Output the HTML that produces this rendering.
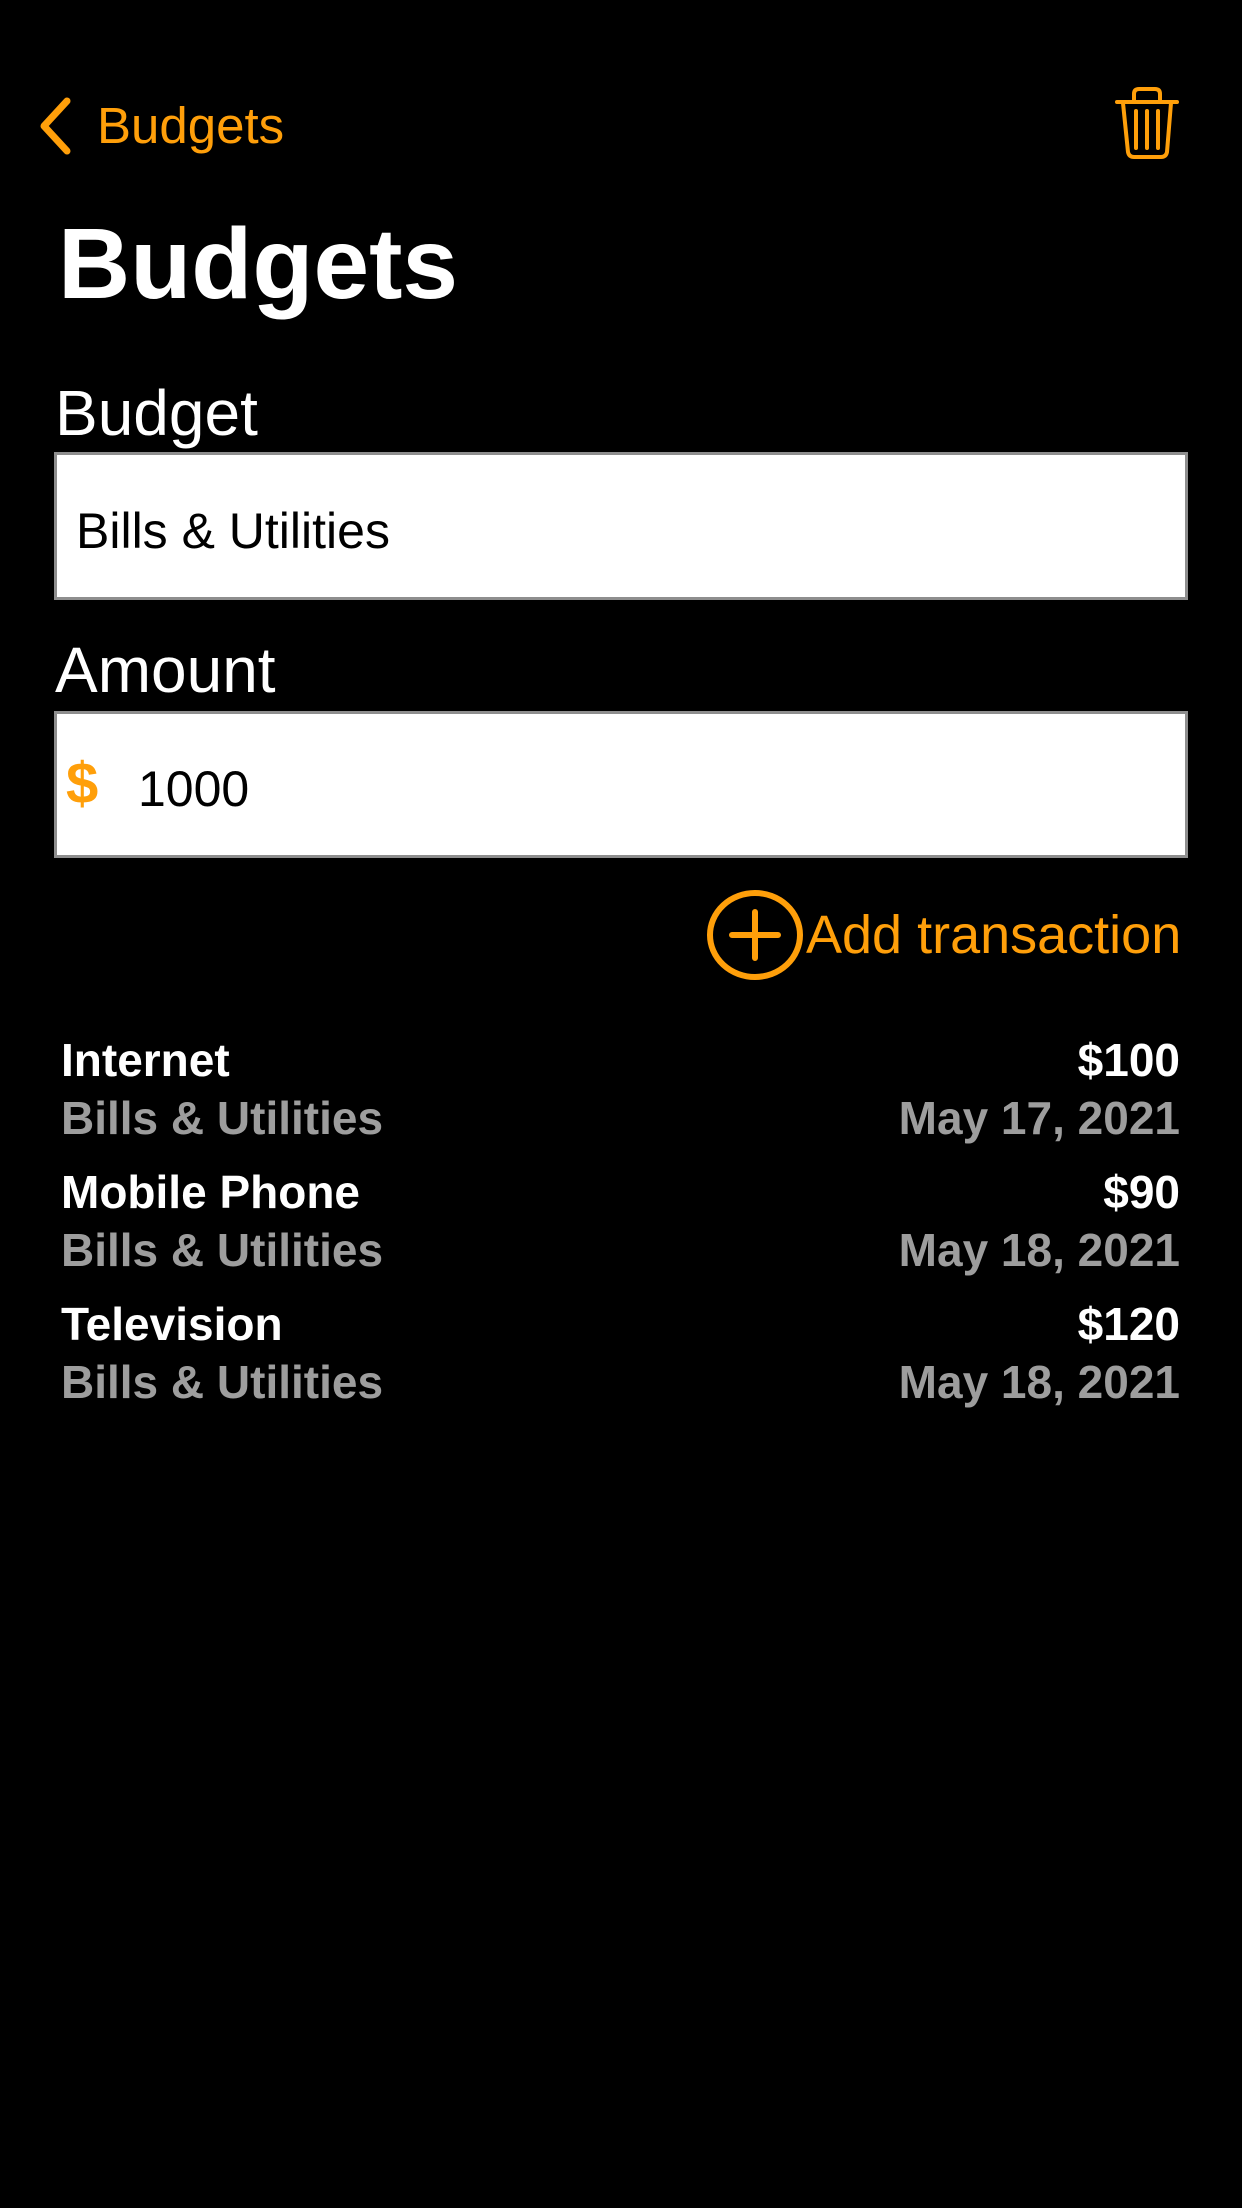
<!DOCTYPE html>
<html><head><meta charset="utf-8"><style>
html,body{margin:0;padding:0;background:#000;}
body{width:1242px;height:2208px;position:relative;overflow:hidden;font-family:"Liberation Sans",sans-serif;}
.a{position:absolute;white-space:nowrap;}
.or{color:#FF9F0A;}
.box{position:absolute;left:54px;width:1128px;background:#fff;border:3px solid #8e8e8e;}
.row{position:absolute;left:61px;width:1119px;font-size:46px;}
.row .t{position:absolute;left:0;top:0;color:#fff;font-weight:bold;}
.row .r{position:absolute;right:0;top:0;color:#fff;font-weight:bold;}
.row .s{position:absolute;left:0;top:58px;color:#9d9d9d;font-weight:bold;}
.row .d{position:absolute;right:0;top:58px;color:#9d9d9d;font-weight:bold;}
</style></head><body>
<svg class="a" style="left:36px;top:96px" width="40" height="60" viewBox="0 0 40 60"><path d="M31 5 L8 30 L31 55" fill="none" stroke="#FF9F0A" stroke-width="7" stroke-linecap="round" stroke-linejoin="round"/></svg>
<div class="a or" style="left:97px;top:96px;font-size:51px;">Budgets</div>
<svg class="a" style="left:1110px;top:80px" width="80" height="85" viewBox="1110 80 80 85"><g fill="none" stroke="#FF9F0A" stroke-width="4" stroke-linecap="round" stroke-linejoin="round"><path d="M1117 102 H1177"/><path d="M1134 101 V94 Q1134 89 1139 89 H1155 Q1160 89 1160 94 V101"/><path d="M1123 103 L1128 152 Q1129 157 1134 157 H1161 Q1166 157 1167 152 L1171 103"/><path d="M1136 111 V148 M1147 111 V148 M1158 111 V148"/></g></svg>
<div class="a" style="left:58px;top:207px;font-size:100px;font-weight:bold;color:#fff;">Budgets</div>
<div class="a" style="left:55px;top:376px;font-size:64px;color:#fff;">Budget</div>
<div class="box" style="top:452px;height:142px;"></div>
<div class="a" style="left:76px;top:502px;font-size:50px;color:#000;">Bills &amp; Utilities</div>
<div class="a" style="left:55px;top:633px;font-size:64px;color:#fff;">Amount</div>
<div class="box" style="top:711px;height:141px;"></div>
<div class="a or" style="left:66px;top:750px;font-size:58px;font-weight:bold;">$</div>
<div class="a" style="left:138px;top:760px;font-size:50px;color:#000;">1000</div>
<svg class="a" style="left:705px;top:888px" width="100" height="94" viewBox="0 0 100 94"><ellipse cx="50" cy="47" rx="45" ry="42" fill="none" stroke="#FF9F0A" stroke-width="6"/><path d="M50 24 V70 M27 47 H73" stroke="#FF9F0A" stroke-width="6" stroke-linecap="round"/></svg>
<div class="a or" style="left:806px;top:904px;font-size:54px;">Add transaction</div>
<div class="row" style="top:1033px"><span class="t">Internet</span><span class="r">$100</span><span class="s">Bills &amp; Utilities</span><span class="d">May 17, 2021</span></div>
<div class="row" style="top:1165px"><span class="t">Mobile Phone</span><span class="r">$90</span><span class="s">Bills &amp; Utilities</span><span class="d">May 18, 2021</span></div>
<div class="row" style="top:1297px"><span class="t">Television</span><span class="r">$120</span><span class="s">Bills &amp; Utilities</span><span class="d">May 18, 2021</span></div>
</body></html>
